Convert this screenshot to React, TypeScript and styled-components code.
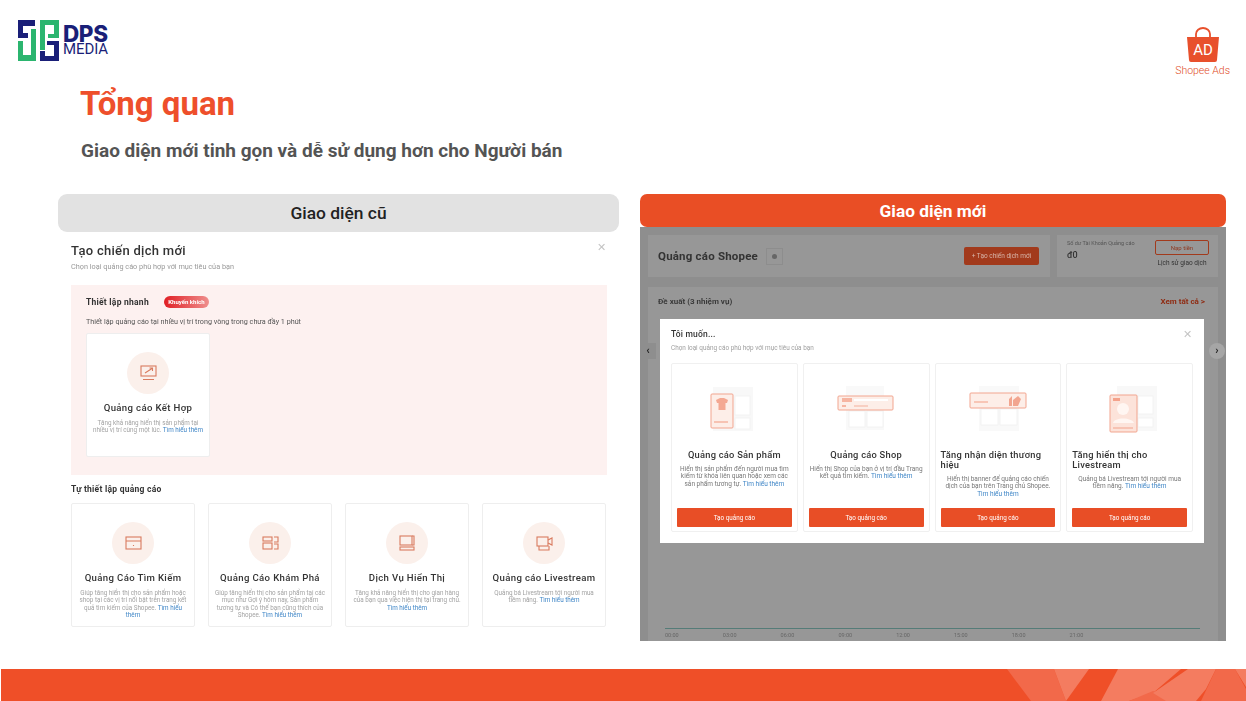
import React from 'react';
import styled, { createGlobalStyle } from 'styled-components';

const GlobalStyle = createGlobalStyle`
  html, body {
    margin: 0;
    padding: 0;
    background: #fff;
  }
  * {
    box-sizing: border-box;
  }
`;

const Slide = styled.div`
  width: 1246px;
  height: 701px;
  overflow: hidden;
  display: flex;
  flex-direction: column;
  background: #fff;
  font-family: Roboto, "Liberation Sans", sans-serif;
`;

const TopBar = styled.div`
  height: 85px;
  display: flex;
  justify-content: space-between;
  padding: 20px 16px 0 18px;
`;

const DpsLogo = styled.div`
  display: flex;
  gap: 3px;
  align-items: flex-start;
  height: 41px;
`;

const DpsText = styled.div`
  display: flex;
  flex-direction: column;
  padding-top: 5px;
  color: #1a1f78;
`;

const DpsName = styled.span`
  font-family: Inter, sans-serif;
  font-size: 22.5px;
  line-height: 18px;
  font-weight: 800;
  letter-spacing: -0.4px;
`;

const DpsSub = styled.span`
  font-size: 15px;
  line-height: 13px;
  font-weight: 400;
  letter-spacing: -0.1px;
`;

const AdsLogo = styled.div`
  display: flex;
  flex-direction: column;
  align-items: center;
  margin-top: 7px;
  height: 50px;
`;

const AdsLabel = styled.span`
  font-size: 10.5px;
  line-height: 12px;
  font-weight: 300;
  color: #e04a26;
  margin-top: 2px;
  white-space: nowrap;
`;

const TitleBlock = styled.div`
  height: 109px;
  padding-left: 80px;
`;

const Title = styled.h1`
  margin: 0;
  font-size: 33px;
  line-height: 38px;
  font-weight: 700;
  color: #ee4f2b;
`;

const Subtitle = styled.p`
  margin: 16px 0 0 1px;
  font-size: 19px;
  line-height: 24px;
  font-weight: 700;
  color: #545454;
`;

const Columns = styled.div`
  display: flex;
  gap: 21px;
  padding-left: 58px;
`;

const LeftColumn = styled.section`
  width: 561px;
`;

const RightColumn = styled.section`
  width: 586px;
`;

const OldPill = styled.div`
  height: 38px;
  border-radius: 9px;
  background: #e2e2e2;
  color: #222;
  display: flex;
  align-items: center;
  justify-content: center;
  font-size: 17.4px;
  font-weight: 500;
`;

const NewPill = styled.div`
  position: relative;
  z-index: 2;
  height: 33px;
  border-radius: 7px;
  background: #e94e25;
  color: #fff;
  display: flex;
  align-items: center;
  justify-content: center;
  font-size: 17.3px;
  font-weight: 700;
`;

const OldShot = styled.div`
  position: relative;
  width: 549px;
  height: 395px;
  overflow: hidden;
  padding: 11px 0 0 13px;
  filter: blur(0.35px);
`;

const ShotHeading = styled.h2`
  margin: 0;
  font-size: 13px;
  line-height: 16px;
  font-weight: 500;
  letter-spacing: 0.3px;
  color: #333;
`;

const ShotHint = styled.p`
  margin: 3px 0 0;
  font-size: 7.3px;
  line-height: 10px;
  color: #999;
`;

const CloseMark = styled.span<{ $tone: string }>`
  position: absolute;
  top: 9px;
  right: ${(p) => (p.$tone === 'old' ? '1px' : '12px')};
  font-size: 11px;
  line-height: 14px;
  font-weight: 300;
  color: #c4c4c4;
`;

const QuickBox = styled.div`
  width: 536px;
  height: 190px;
  margin-top: 13px;
  padding: 10px 15px 0;
  background: #fdf1f0;
`;

const QuickHead = styled.div`
  display: flex;
  align-items: center;
  gap: 15px;
  height: 13px;
`;

const QuickTitle = styled.span`
  font-size: 8.5px;
  font-weight: 700;
  letter-spacing: 0.25px;
  color: #333;
`;

const Badge = styled.span`
  width: 45px;
  height: 12px;
  border-radius: 6px;
  background: linear-gradient(90deg, #e01f25, #ef8f8d);
  color: #fff;
  font-size: 6px;
  font-weight: 700;
  line-height: 12px;
  text-align: center;
`;

const QuickHint = styled.p`
  margin: 9px 0 6px;
  font-size: 7.2px;
  line-height: 10px;
  color: #555;
`;

const CardRow = styled.div`
  display: flex;
  gap: 13px;
  margin-top: 7px;
`;

const AdCard = styled.div`
  flex: none;
  width: 124px;
  height: 124px;
  background: #fff;
  border: 1px solid #eee;
  border-radius: 2px;
  display: flex;
  flex-direction: column;
  align-items: center;
  padding: 18px 5px 0;
`;

const IconDisc = styled.div`
  width: 42px;
  height: 42px;
  border-radius: 50%;
  background: #fbf0eb;
  display: flex;
  align-items: center;
  justify-content: center;
  flex: none;
`;

const CardName = styled.h3`
  margin: 7px 0 0;
  font-size: 9.6px;
  line-height: 13px;
  font-weight: 500;
  letter-spacing: 0.35px;
  color: #333;
  white-space: nowrap;
`;

const CardText = styled.p`
  margin: 6px 0 0;
  font-size: 6.3px;
  line-height: 7.3px;
  text-align: center;
  color: #a3a3a3;
`;

const LearnMore = styled.span`
  color: #3f86c7;
`;

const SelfHeading = styled.h4`
  margin: 7px 0 0;
  font-size: 8.5px;
  line-height: 14px;
  font-weight: 700;
  letter-spacing: 0.25px;
  color: #333;
`;

const NewShot = styled.div`
  position: relative;
  height: 414px;
  background: #8e8e8e;
  overflow: hidden;
  padding: 8px 8px 0;
  filter: blur(0.35px);
`;

const DimRow = styled.div`
  display: flex;
  gap: 7px;
  height: 42px;
`;

const DimBlock = styled.div<{ $grow?: boolean }>`
  flex: ${(p) => (p.$grow ? 1 : 'none')};
  width: ${(p) => (p.$grow ? 'auto' : '161px')};
  background: #979797;
  display: flex;
  align-items: ${(p) => (p.$grow ? 'center' : 'flex-start')};
  justify-content: space-between;
  padding: ${(p) => (p.$grow ? '0 10px' : '5px 10px 0')};
`;

const DimBrand = styled.div`
  display: flex;
  align-items: center;
  gap: 8px;
  font-size: 11.5px;
  font-weight: 700;
  letter-spacing: 0.2px;
  color: #333;
`;

const DimHelp = styled.span`
  width: 17px;
  height: 17px;
  border: 1px solid #8d8d8d;
  display: flex;
  align-items: center;
  justify-content: center;

  &::before {
    content: '';
    width: 5px;
    height: 5px;
    border-radius: 50%;
    background: #666;
  }
`;

const DimCreate = styled.span`
  width: 75px;
  height: 18px;
  margin-right: 1px;
  border-radius: 2px;
  background: #a23a1c;
  color: #d8b6aa;
  font-size: 6.5px;
  line-height: 18px;
  text-align: center;
`;

const BalanceInfo = styled.div`
  display: flex;
  flex-direction: column;
  gap: 3px;
  font-size: 5.5px;
  line-height: 7px;
  color: #555;
`;

const BalanceValue = styled.span`
  font-size: 9px;
  line-height: 11px;
  font-weight: 500;
  color: #333;
`;

const BalanceActions = styled.div`
  display: flex;
  flex-direction: column;
  align-items: center;
  margin-right: -1px;
`;

const TopUp = styled.span`
  width: 54px;
  height: 15px;
  border: 1px solid #a23a1c;
  border-radius: 2px;
  color: #8f3a22;
  font-size: 6px;
  line-height: 13px;
  text-align: center;
`;

const History = styled.span`
  width: 54px;
  height: 13px;
  margin-top: 2px;
  color: #333;
  font-size: 6.5px;
  line-height: 13px;
  text-align: center;
  white-space: nowrap;
`;

const DimBody = styled.div`
  height: 356px;
  margin-top: 10px;
  background: #979797;
  padding: 8px 13px 8px 10px;
`;

const DimHead = styled.div`
  display: flex;
  justify-content: space-between;
  font-size: 8px;
  line-height: 14px;
  font-weight: 700;
  color: #3a3a3a;
`;

const DimLink = styled.span`
  color: #8f2b12;
`;

const AxisArea = styled.div`
  margin: 319px 5px 0 7px;
  border-top: 1px solid #557c78;
  display: flex;
  padding-top: 2px;
`;

const AxisTick = styled.span`
  width: 57.8px;
  font-size: 5.5px;
  line-height: 8px;
  color: #666;
`;

const PagerDot = styled.span<{ $side: 'left' | 'right' }>`
  position: absolute;
  top: 116px;
  ${(p) => p.$side}: ${(p) => (p.$side === 'right' ? '1px' : '0')};
  width: 16px;
  height: 16px;
  border-radius: ${(p) => (p.$side === 'right' ? '50%' : '0')};
  background: ${(p) => (p.$side === 'right' ? '#a6a6a6' : '#8e8e8e')};
  display: flex;
  align-items: center;
  justify-content: center;
  font-size: 11px;
  line-height: 14px;
  font-weight: 700;
  color: #222;
`;

const Modal = styled.div`
  position: absolute;
  left: 20px;
  top: 92px;
  width: 544px;
  height: 224px;
  background: #fff;
  padding: 9px 11px 0;
`;

const ModalTitle = styled.h2`
  margin: 0;
  font-size: 8.5px;
  line-height: 13px;
  font-weight: 500;
  letter-spacing: 0.2px;
  color: #333;
`;

const ModalHint = styled.p`
  margin: 3px 0 0;
  font-size: 6.4px;
  line-height: 9px;
  color: #a0a0a0;
`;

const OfferRow = styled.div`
  display: flex;
  gap: 5px;
  margin-top: 10px;
`;

const OfferCard = styled.div`
  width: 127px;
  height: 169px;
  border: 1px solid #f0f0f0;
  border-radius: 2px;
  display: flex;
  flex-direction: column;
  padding: 21px 5px 4px;
`;

const OfferArt = styled.div`
  height: 50px;
  display: flex;
  justify-content: center;
`;

const OfferName = styled.h3`
  margin: 15px 0 0;
  min-height: 10px;
  font-size: 9.3px;
  line-height: 10px;
  font-weight: 500;
  letter-spacing: 0.25px;
  color: #333;
  display: flex;
  justify-content: center;
`;

const OfferText = styled.p`
  margin: 6px 0 0;
  font-size: 6.5px;
  line-height: 7.4px;
  text-align: center;
  color: #777;
`;

const OfferButton = styled.button`
  margin-top: auto;
  height: 19px;
  border: none;
  border-radius: 1px;
  background: #e84e26;
  color: #fff;
  font-family: inherit;
  font-size: 6.3px;
  padding: 0;
`;

const Footer = styled.footer`
  margin-top: auto;
  margin-left: 1px;
  height: 32px;
  background: #ef4f28;
  overflow: hidden;
  display: flex;
  justify-content: flex-end;
`;

const DpsMark = () => (
  <svg width="42" height="41" viewBox="0 0 42 41">
    <path fill="#1a1f78" d="M0 0H17V6H5V13H10V18H0Z" />
    <path fill="#2bb56f" d="M0 21H5V35H13V9H18V41H0Z" />
    <path fill="#2bb56f" d="M22 0H41V18H30V14H36V5H27V30H22Z" />
    <path fill="#1a1f78" d="M29 21H41V41H22V31H27V36H36V25H29Z" />
  </svg>
);

const AdsBag = () => (
  <svg width="34" height="36" viewBox="0 0 34 36">
    <path d="M10 11V7a7 6 0 0 1 14 0v4" fill="none" stroke="#e8502c" strokeWidth="1.8" />
    <path d="M1 10H33L31 33a2 2 0 0 1-2 2H5a2 2 0 0 1-2-2Z" fill="#e8502c" />
    <text x="17" y="28" textAnchor="middle" fontFamily="Roboto, sans-serif" fontSize="15" fill="#fff">AD</text>
  </svg>
);

const line = { fill: 'none', stroke: '#d97b5f', strokeWidth: 1.1 };

const ComboIcon = () => (
  <svg width="17" height="16" viewBox="0 0 17 16">
    <rect x="1" y="1" width="15" height="10" {...line} />
    <path d="M3 14.5H14M5 8L12 3.5M9.5 3H12.5V6" {...line} />
  </svg>
);

const SearchIcon = () => (
  <svg width="17" height="14" viewBox="0 0 17 14">
    <rect x="1" y="1" width="15" height="12" {...line} />
    <path d="M1 5H16M8.5 9V10" {...line} />
  </svg>
);

const DiscoverIcon = () => (
  <svg width="17" height="14" viewBox="0 0 17 14">
    <rect x="1" y="1" width="9" height="4" {...line} />
    <rect x="1" y="7" width="9" height="6" {...line} />
    <path d="M12 1H16V6H12M12 8H16V13H12" {...line} />
  </svg>
);

const DisplayIcon = () => (
  <svg width="16" height="16" viewBox="0 0 16 16">
    <rect x="1" y="1" width="12" height="9" {...line} />
    <path d="M13 1H15V10H13" {...line} />
    <rect x="1" y="12" width="14" height="3" {...line} />
  </svg>
);

const LiveIcon = () => (
  <svg width="17" height="15" viewBox="0 0 17 15">
    <rect x="1" y="1" width="11" height="9" {...line} />
    <path d="M12 4L16 2V9L12 7M3 10V14H13V10" {...line} />
  </svg>
);

const Ghost = ({ x, y, w, h }: { x: number; y: number; w: number; h: number }) => (
  <rect x={x} y={y} width={w} height={h} fill="#fff" stroke="#f1f1f1" strokeWidth="0.8" />
);

const ProductArt = () => (
  <svg width="64" height="50" viewBox="0 0 64 50">
    <rect x="11" y="2" width="40" height="44" fill="#f8f8f8" />
    <Ghost x={33} y={11} w={15} h={19} />
    <Ghost x={33} y={33} w={15} h={11} />
    <rect x="9" y="9" width="22" height="34" rx="1" fill="#fdeee8" stroke="#f2a58f" />
    <path d="M14 15L18 13H22L26 15L25 18H23.5V25H16.5V18H15Z" fill="#f4a892" />
    <rect x="12" y="36" width="14" height="2" fill="#f7c3b3" />
  </svg>
);

const ShopArt = () => (
  <svg width="64" height="50" viewBox="0 0 64 50">
    <rect x="12" y="1" width="38" height="44" fill="#f9f9f9" />
    <Ghost x={15} y={26} w={16} h={16} />
    <Ghost x={33} y={26} w={16} h={16} />
    <rect x="4" y="11" width="55" height="14" rx="1" fill="#fdeee8" stroke="#f2a58f" />
    <rect x="8" y="13" width="10" height="4" fill="#f6b5a2" />
    <rect x="8" y="20" width="4" height="2" fill="#f6b5a2" />
    <rect x="20" y="14" width="34" height="2" fill="#fff" />
    <rect x="20" y="20" width="14" height="2" fill="#f8cfc2" />
  </svg>
);

const BrandArt = () => (
  <svg width="64" height="50" viewBox="0 0 64 50">
    <rect x="13" y="1" width="40" height="45" fill="#f9f9f9" />
    <Ghost x={15} y={24} w={17} h={16} />
    <Ghost x={34} y={24} w={17} h={16} />
    <rect x="4" y="8" width="56" height="15" rx="1" fill="#fdeee8" stroke="#f2a58f" />
    <rect x="8" y="16" width="14" height="2" fill="#f8c6b6" />
    <path d="M43 21V14L46 11V21ZM47 21V15L52 11L55 14L52 21Z" fill="#f2a58f" />
  </svg>
);

const LiveArt = () => (
  <svg width="64" height="50" viewBox="0 0 64 50">
    <rect x="19" y="1" width="40" height="45" fill="#f8f8f8" />
    <Ghost x={40} y={11} w={15} h={18} />
    <Ghost x={40} y={33} w={15} h={9} />
    <rect x="12" y="10" width="27" height="37" rx="1" fill="#fce3da" stroke="#f2a58f" />
    <rect x="15" y="13" width="7" height="3" fill="#f4a28b" />
    <circle cx="25" cy="24" r="6" fill="#fff6f2" />
    <path d="M15 38C16 32 34 32 36 38Z" fill="#fff6f2" />
    <rect x="15" y="42" width="20" height="2" fill="#f7c3b3" />
  </svg>
);

const selfCards = [
  {
    icon: <SearchIcon />,
    name: 'Quảng Cáo Tìm Kiếm',
    text: 'Giúp tăng hiển thị cho sản phẩm hoặc shop tại các vị trí nổi bật trên trang kết quả tìm kiếm của Shopee.',
  },
  {
    icon: <DiscoverIcon />,
    name: 'Quảng Cáo Khám Phá',
    text: 'Giúp tăng hiển thị cho sản phẩm tại các mục như Gợi ý hôm nay, Sản phẩm tương tự và Có thể bạn cũng thích của Shopee.',
  },
  {
    icon: <DisplayIcon />,
    name: 'Dịch Vụ Hiển Thị',
    text: 'Tăng khả năng hiển thị cho gian hàng của bạn qua việc hiện thị tại trang chủ.',
  },
  {
    icon: <LiveIcon />,
    name: 'Quảng cáo Livestream',
    text: 'Quảng bá Livestream tới người mua tiềm năng.',
  },
];

const offers = [
  {
    art: <ProductArt />,
    name: 'Quảng cáo Sản phẩm',
    text: 'Hiển thị sản phẩm đến người mua tìm kiếm từ khóa liên quan hoặc xem các sản phẩm tương tự.',
  },
  {
    art: <ShopArt />,
    name: 'Quảng cáo Shop',
    text: 'Hiển thị Shop của bạn ở vị trí đầu Trang kết quả tìm kiếm.',
  },
  {
    art: <BrandArt />,
    name: 'Tăng nhận diện thương hiệu',
    text: 'Hiển thị banner để quảng cáo chiến dịch của bạn trên Trang chủ Shopee.',
  },
  {
    art: <LiveArt />,
    name: 'Tăng hiển thị cho Livestream',
    text: 'Quảng bá Livestream tới người mua tiềm năng.',
  },
];

const ticks = ['00:00', '03:00', '06:00', '09:00', '12:00', '15:00', '18:00', '21:00'];

const App = () => {
  return (
    <Slide>
      <GlobalStyle />
      <TopBar>
        <DpsLogo>
          <DpsMark />
          <DpsText>
            <DpsName>DPS</DpsName>
            <DpsSub>MEDIA</DpsSub>
          </DpsText>
        </DpsLogo>
        <AdsLogo>
          <AdsBag />
          <AdsLabel>Shopee Ads</AdsLabel>
        </AdsLogo>
      </TopBar>

      <TitleBlock>
        <Title>Tổng quan</Title>
        <Subtitle>Giao diện mới tinh gọn và dễ sử dụng hơn cho Người bán</Subtitle>
      </TitleBlock>

      <Columns>
        {/* old interface */}
        <LeftColumn>
          <OldPill>Giao diện cũ</OldPill>
          <OldShot>
            <CloseMark $tone="old">✕</CloseMark>
            <ShotHeading>Tạo chiến dịch mới</ShotHeading>
            <ShotHint>Chọn loại quảng cáo phù hợp với mục tiêu của bạn</ShotHint>
            <QuickBox>
              <QuickHead>
                <QuickTitle>Thiết lập nhanh</QuickTitle>
                <Badge>Khuyến khích</Badge>
              </QuickHead>
              <QuickHint>Thiết lập quảng cáo tại nhiều vị trí trong vòng trong chưa đầy 1 phút</QuickHint>
              <AdCard>
                <IconDisc>
                  <ComboIcon />
                </IconDisc>
                <CardName>Quảng cáo Kết Hợp</CardName>
                <CardText>
                  Tăng khả năng hiển thị sản phẩm tại nhiều vị trí cùng một lúc. <LearnMore>Tìm hiểu thêm</LearnMore>
                </CardText>
              </AdCard>
            </QuickBox>
            <SelfHeading>Tự thiết lập quảng cáo</SelfHeading>
            <CardRow>
              {selfCards.map((card) => (
                <AdCard key={card.name}>
                  <IconDisc>{card.icon}</IconDisc>
                  <CardName>{card.name}</CardName>
                  <CardText>
                    {card.text} <LearnMore>Tìm hiểu thêm</LearnMore>
                  </CardText>
                </AdCard>
              ))}
            </CardRow>
          </OldShot>
        </LeftColumn>

        {/* new interface */}
        <RightColumn>
          <NewPill>Giao diện mới</NewPill>
          <NewShot>
            <DimRow>
              <DimBlock $grow>
                <DimBrand>
                  Quảng cáo Shopee
                  <DimHelp />
                </DimBrand>
                <DimCreate>+ Tạo chiến dịch mới</DimCreate>
              </DimBlock>
              <DimBlock>
                <BalanceInfo>
                  Số dư Tài Khoản Quảng cáo
                  <BalanceValue>đ0</BalanceValue>
                </BalanceInfo>
                <BalanceActions>
                  <TopUp>Nạp tiền</TopUp>
                  <History>Lịch sử giao dịch</History>
                </BalanceActions>
              </DimBlock>
            </DimRow>
            <DimBody>
              <DimHead>
                <span>Đề xuất (3 nhiệm vụ)</span>
                <DimLink>Xem tất cả &gt;</DimLink>
              </DimHead>
              <AxisArea>
                {ticks.map((tick) => (
                  <AxisTick key={tick}>{tick}</AxisTick>
                ))}
              </AxisArea>
            </DimBody>
            <PagerDot $side="left">‹</PagerDot>
            <PagerDot $side="right">›</PagerDot>
            <Modal>
              <CloseMark $tone="new">✕</CloseMark>
              <ModalTitle>Tôi muốn...</ModalTitle>
              <ModalHint>Chọn loại quảng cáo phù hợp với mục tiêu của bạn</ModalHint>
              <OfferRow>
                {offers.map((offer) => (
                  <OfferCard key={offer.name}>
                    <OfferArt>{offer.art}</OfferArt>
                    <OfferName>
                      <span>{offer.name}</span>
                    </OfferName>
                    <OfferText>
                      {offer.text} <LearnMore>Tìm hiểu thêm</LearnMore>
                    </OfferText>
                    <OfferButton>Tạo quảng cáo</OfferButton>
                  </OfferCard>
                ))}
              </OfferRow>
            </Modal>
          </NewShot>
        </RightColumn>
      </Columns>

      <Footer>
        <svg width="245" height="32" viewBox="0 0 245 32">
          <path d="M6 0H53L65 32H30Z" fill="#f2694a" />
          <path d="M53 0H88L65 32Z" fill="#f47c60" />
          <path d="M117 0H180L152 24L128 32H100Z" fill="#f47c60" />
          <path d="M128 32L152 22L195 32Z" fill="#f2694a" />
          <path d="M187 0H215L205 20L195 32H165L152 24Z" fill="#f47c60" />
          <path d="M215 0H234L245 20V32H200Z" fill="#f2694a" />
          <path d="M234 0H245V18Z" fill="#f47c60" />
        </svg>
      </Footer>
    </Slide>
  );
};

export default App;
